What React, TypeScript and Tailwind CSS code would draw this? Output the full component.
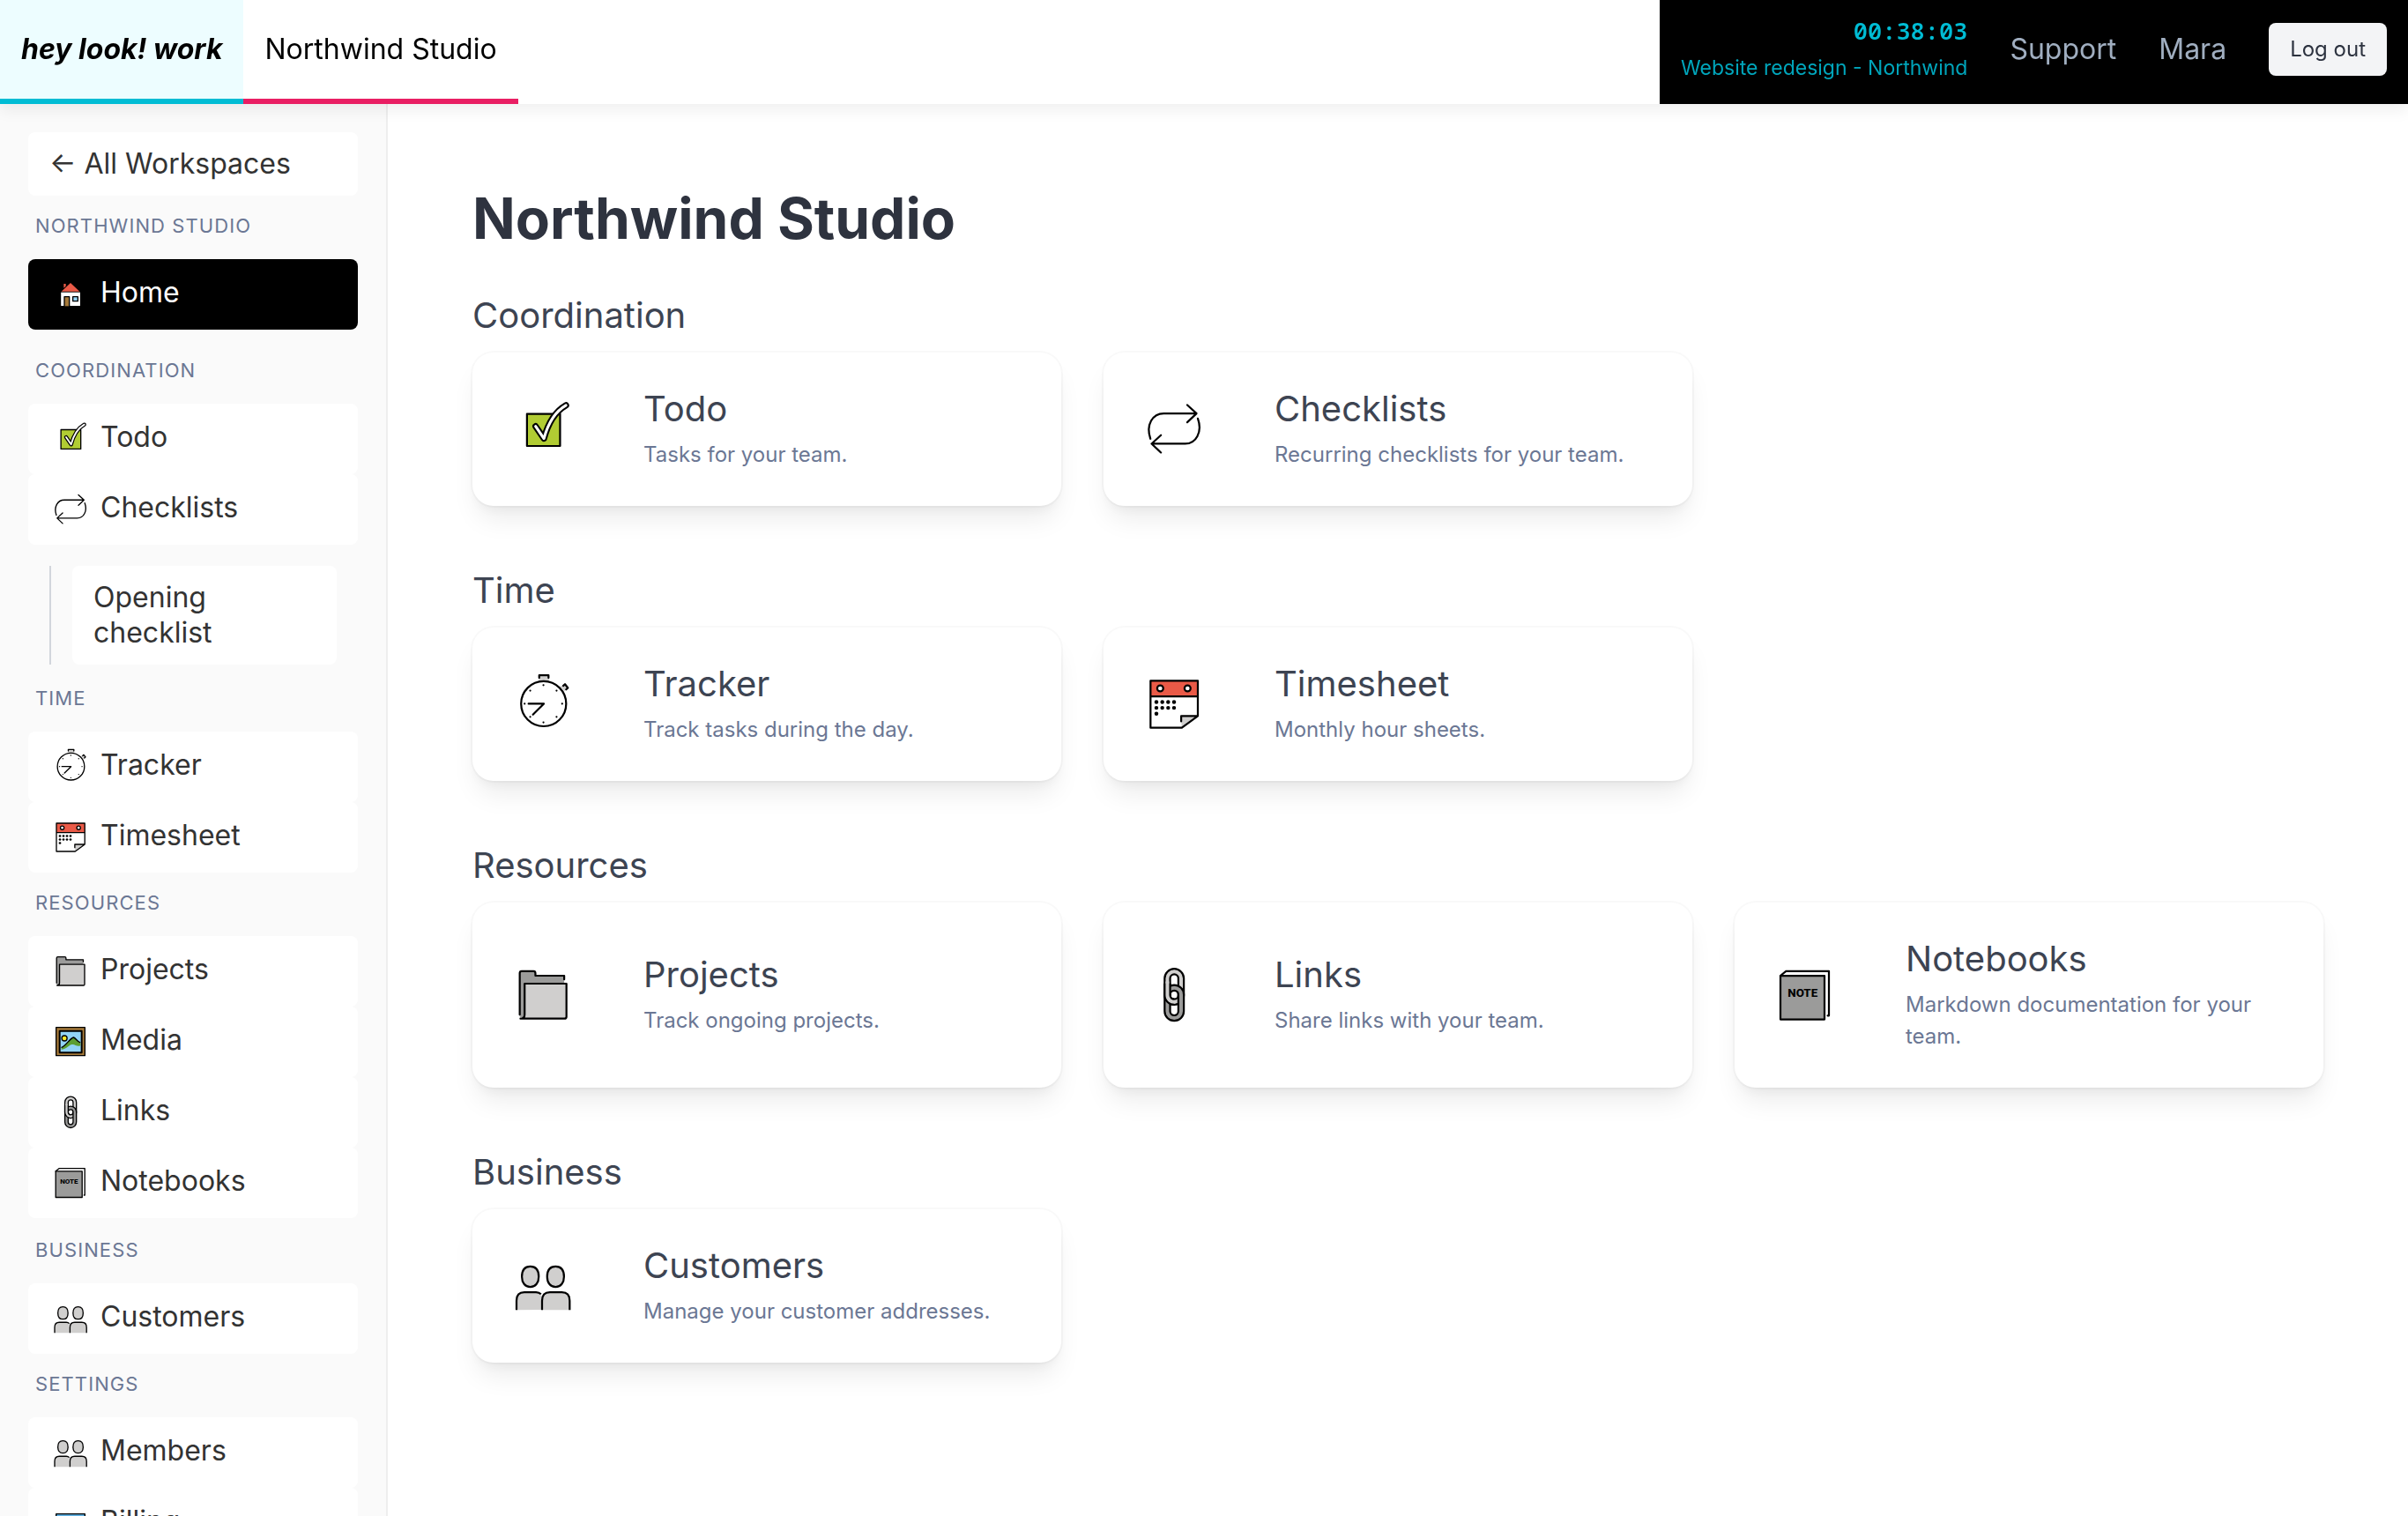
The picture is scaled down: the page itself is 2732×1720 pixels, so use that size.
import type { ReactNode } from 'react'

type IconName =
  | 'home' | 'todo' | 'repeat' | 'stopwatch' | 'calendar' | 'folder'
  | 'picture' | 'link' | 'note' | 'people' | 'card'

const drawings: Record<IconName, ReactNode> = {
  home: (
    <>
      <path d="M24.5 25v-7h3.5v4z" fill="#ea5a47" />
      <path d="M20.5 31 36 16.5 51.500 31z" fill="#ea5a47" />
      <path d="M19.800 32.500h32.600v23H19.800z" fill="#fff" />
      <path d="M25.500 56V40h8.500v16" fill="#a57939" stroke="#000" />
      <path d="M40 40h8.500v7.500H40z" fill="#92d3f5" stroke="#000" />
    </>
  ),
  todo: (
    <>
      <path d="M19.700 20.300h33.800v32.800H19.700z" fill="#b1cc33" stroke="#000" />
      <path d="M28.500 33 37 45.500C41 30.500 49 17.500 59.500 11.500" stroke="#000" strokeWidth="6.500" />
      <path d="M28.500 33 37 45.500C41 30.500 49 17.500 59.500 11.500" stroke="#fff" strokeWidth="2.800" />
    </>
  ),
  repeat: (
    <g stroke="#000">
      <path d="M11.900 45.700C7 31.500 14 19.900 25.500 19.900H59M49.500 11.200 59 19.900l-9.500 9" />
      <path d="M60.300 25c5 14-2 25.800-12.900 25.800H13.100M22.600 42.100l-9.500 8.700 9.500 9" />
    </g>
  ),
  stopwatch: (
    <>
      <path d="M32 7.500h10v5H32zM53.500 18l4-2.500 3.500 4-3 3z" fill="#d0cfce" />
      <circle cx="36.700" cy="35.500" r="23" fill="#fff" stroke="#000" />
      <path d="M32.200 9.100V6.500h9.500v2.600M56.700 17.200l1.800-1.700 3 3.800-1.800 1.600M21.300 35.500h15.600L25.800 46.600" stroke="#000" />
      <g fill="#000">
        <circle cx="36.500" cy="16.500" r="1" /><circle cx="49.900" cy="22.100" r="1" />
        <circle cx="55.600" cy="35.500" r="1" /><circle cx="49.900" cy="48.900" r="1" />
        <circle cx="36.500" cy="54.500" r="1" /><circle cx="23" cy="48.900" r="1" />
        <circle cx="17.300" cy="35.500" r="1" /><circle cx="23" cy="22.100" r="1" />
      </g>
    </>
  ),
  calendar: (
    <>
      <path d="M12 12h48.300v36L44 60H12z" fill="#fff" />
      <path d="M12 12h48.300v16H12z" fill="#ea5a47" />
      <path d="M43.300 48h17L43.800 60z" fill="#d0cfce" />
      <path d="M12 12h48.300v36L44 60H12zM12 28h48.300M60.300 48h-17v5.500" stroke="#000" />
      <circle cx="21.900" cy="19.800" r="3.100" fill="#fff" stroke="#000" />
      <circle cx="49.800" cy="19.800" r="3.100" fill="#fff" stroke="#000" />
      <g fill="#000">
        {[18, 24, 30, 36].map((x) => (
          <g key={x}>
            <circle cx={x} cy="33.700" r="2" />
            <circle cx={x} cy="39.700" r="2" />
          </g>
        ))}
        <circle cx="18" cy="45.700" r="2" />
      </g>
    </>
  ),
  folder: (
    <>
      <path d="M12.300 58V13.500q0-2 2-2h12q2 0 2 2v2.700h29.400V24H17.300v36z" fill="#9b9b9a" />
      <path d="M17.300 24.300H60V58q0 2-2 2H15q2.300-.5 2.300-3z" fill="#d0cfce" />
      <path d="M12.300 56V13.500q0-2 2-2h12q2 0 2 2v2.700h29.400v3.800" stroke="#000" />
      <path d="M13 60q4.300 0 4.300-4V24.300H60V58q0 2-2 2z" stroke="#000" />
    </>
  ),
  picture: (
    <>
      <path d="M11.500 11.500h49v48h-49z" fill="#a57939" stroke="#000" />
      <path d="M17.500 17.500h37.500v37H17.500z" fill="#92d3f5" stroke="#000" strokeWidth="3" />
      <path d="M20.500 46C29 42 33 32 40 29c5 0 7 7 13 8.500v5c-7 3-10-4-16-1.500-5 2-9 8-16.500 8z" fill="#5c9e31" />
      <path d="M21 45.500C29 42 34 31 41 28.500c4 1 6 7 11 8.500" stroke="#000" />
      <circle cx="25.700" cy="30" r="4.500" fill="#fcea2b" stroke="#000" />
    </>
  ),
  link: (
    <>
      <rect x="29.200" y="12" width="14" height="31" rx="7" stroke="#000" strokeWidth="7.600" />
      <rect x="29.200" y="12" width="14" height="31" rx="7" stroke="#d0cfce" strokeWidth="3.600" />
      <rect x="29.200" y="28.500" width="14" height="31" rx="7" stroke="#000" strokeWidth="7.600" />
      <rect x="29.200" y="28.500" width="14" height="31" rx="7" stroke="#9b9b9a" strokeWidth="3.600" />
      <path d="M29.200 24v12a7 7 0 0 0 7 7" stroke="#000" strokeWidth="7.600" strokeLinecap="butt" />
      <path d="M29.200 22v14a7 7 0 0 0 8 7" stroke="#d0cfce" strokeWidth="3.600" strokeLinecap="butt" />
    </>
  ),
  note: (
    <>
      <path d="M10.800 16.200 16.500 11.500H60.500V57h-4.600z" fill="#fff" />
      <path d="M10.800 16.200 16.500 11.500H60.300V57h-1.300" stroke="#000" />
      <path d="M10.800 16.300h45V60.800h-45z" fill="#9b9b9a" stroke="#000" />
      <text x="33.500" y="38.200" textAnchor="middle" fontSize="12" fontWeight="800" fontFamily="Roboto, sans-serif" fill="#000" stroke="none">NOTE</text>
    </>
  ),
  people: (
    <g fill="#d0cfce" stroke="#000" strokeLinecap="butt">
      <path d="M23.100 16c6 0 8.600 4.500 8.600 10.500S28.600 37 23.100 37 14.500 32.500 14.500 26.500 17.100 16 23.100 16z" />
      <path d="M48.900 16c6 0 8.600 4.500 8.600 10.500S54.400 37 48.900 37 40.300 32.500 40.300 26.500 42.900 16 48.900 16z" />
      <path d="M9 60.500V51c0-5.500 3-8.600 8-8.600h12q3 0 5 2l1 16" stroke="none" />
      <path d="M9 60.500V51c0-5.500 3-8.600 8-8.600h12q3 0 5 2" fill="none" />
      <path d="M35.100 60.500V51c0-5.500 3-8.600 8-8.600h12.200c5 0 8 3.100 8 8.600v9.500" />
    </g>
  ),
  card: (
    <>
      <path d="M11.500 20.500h49v31h-49z" fill="#61b2e4" stroke="#000" />
      <path d="M12 27h48v6H12z" fill="#3f3f3f" />
    </>
  ),
}

function Icon({ name, className }: { name: IconName; className: string }) {
  return (
    <svg viewBox="0 0 72 72" className={className} fill="none" strokeWidth="2" strokeLinecap="round" strokeLinejoin="round" aria-hidden="true">
      {drawings[name]}
    </svg>
  )
}

function NavItem({ icon, label, active = false }: { icon: IconName; label: string; active?: boolean }) {
  return (
    <li>
      <a
        href="#"
        aria-current={active ? 'page' : undefined}
        className={
          active
            ? 'block rounded-lg bg-black px-6 py-4 text-[32px] leading-10 text-white'
            : 'block rounded-lg bg-white px-6 py-4 text-[32px] leading-10 text-[#333333]'
        }
      >
        <Icon name={icon} className="mr-2.5 inline-block size-12 align-middle" />
        {label}
      </a>
    </li>
  )
}

function NavGroup({ title, children }: { title: string; children: ReactNode }) {
  return (
    <section>
      <h2 className="px-2 pt-5 pb-6 text-[22px] leading-7 tracking-wider text-[#6b7794] uppercase">{title}</h2>
      <ul>{children}</ul>
    </section>
  )
}

function Card({ icon, title, text }: { icon: IconName; title: string; text: string }) {
  return (
    <a
      href="#"
      className="flex items-center rounded-3xl bg-white p-10 shadow-[0_0_0_2px_rgba(0,0,0,0.025),0_20px_30px_-6px_rgba(0,0,0,0.08),0_8px_12px_-4px_rgba(0,0,0,0.04)]"
    >
      <div className="w-[154px] shrink-0">
        <Icon name={icon} className="block size-20" />
      </div>
      <div className="min-w-0 flex-1">
        <h3 className="mb-2.5 text-[40px] leading-[48px] text-[#3d4452]">{title}</h3>
        <p className="text-2xl leading-9 text-[#6b7794]">{text}</p>
      </div>
    </a>
  )
}

type CardData = { icon: IconName; title: string; text: string }

const sections: { title: string; cards: CardData[] }[] = [
  {
    title: 'Coordination',
    cards: [
      { icon: 'todo', title: 'Todo', text: 'Tasks for your team.' },
      { icon: 'repeat', title: 'Checklists', text: 'Recurring checklists for your team.' },
    ],
  },
  {
    title: 'Time',
    cards: [
      { icon: 'stopwatch', title: 'Tracker', text: 'Track tasks during the day.' },
      { icon: 'calendar', title: 'Timesheet', text: 'Monthly hour sheets.' },
    ],
  },
  {
    title: 'Resources',
    cards: [
      { icon: 'folder', title: 'Projects', text: 'Track ongoing projects.' },
      { icon: 'link', title: 'Links', text: 'Share links with your team.' },
      { icon: 'note', title: 'Notebooks', text: 'Markdown documentation for your team.' },
    ],
  },
  {
    title: 'Business',
    cards: [{ icon: 'people', title: 'Customers', text: 'Manage your customer addresses.' }],
  },
]

export default function App() {
  return (
    <div className="flex h-screen flex-col overflow-hidden bg-white font-['Inter',sans-serif]">
      <header className="relative z-10 flex items-stretch justify-between bg-white text-[32px] leading-10 shadow-[0_8px_16px_rgba(0,0,0,0.06)]">
        <nav className="flex" aria-label="Workspaces">
          <a href="#" className="border-b-6 border-[#00bcd4] bg-[#edfdff] px-6 py-9 font-bold text-black italic">
            hey look! work
          </a>
          <a href="#" className="border-b-6 border-[#e91e63] px-6 py-9 text-black">
            Northwind Studio
          </a>
        </nav>
        <div className="flex items-center gap-12 border-b-6 border-black bg-black px-6 text-[#a0aec0]">
          <a href="#" className="flex flex-col gap-1.5 text-right">
            <span className="font-['Noto_Sans_Mono',monospace] text-[27px] leading-9 font-semibold text-[#00bcd4]">00:38:03</span>
            <span className="text-[23px] leading-9 text-[#00a5bb]">Website redesign - Northwind</span>
          </a>
          <a href="#">Support</a>
          <a href="#">Mara</a>
          <button type="button" className="rounded-lg bg-[#f3f4f6] px-6 py-3 text-2xl leading-9 text-[#2d3340]">
            Log out
          </button>
        </div>
      </header>

      <div className="flex min-h-0 flex-1">
        <aside className="w-[440px] shrink-0 overflow-y-auto border-r-2 border-[#eeeeee] bg-[#fafafa] px-8 pt-8 [scrollbar-width:none]">
          <a href="#" className="block rounded-lg bg-white px-6 py-4 text-[32px] leading-10 text-[#333333]">
            ← All Workspaces
          </a>
          <nav aria-label="Workspace">
            <NavGroup title="Northwind Studio">
              <NavItem icon="home" label="Home" active />
            </NavGroup>
            <div className="pt-3">
              <NavGroup title="Coordination">
                <NavItem icon="todo" label="Todo" />
                <NavItem icon="repeat" label="Checklists" />
                <li className="mx-6 mt-6 mb-1 border-l-2 border-[#d2d6dc] pl-6">
                  <a href="#" className="block rounded-lg bg-white px-6 py-4 text-[32px] leading-10 text-[#333333]">
                    Opening checklist
                  </a>
                </li>
              </NavGroup>
            </div>
            <NavGroup title="Time">
              <NavItem icon="stopwatch" label="Tracker" />
              <NavItem icon="calendar" label="Timesheet" />
            </NavGroup>
            <NavGroup title="Resources">
              <NavItem icon="folder" label="Projects" />
              <NavItem icon="picture" label="Media" />
              <NavItem icon="link" label="Links" />
              <NavItem icon="note" label="Notebooks" />
            </NavGroup>
            <div className="pt-0.5">
              <NavGroup title="Business">
                <NavItem icon="people" label="Customers" />
              </NavGroup>
              <NavGroup title="Settings">
                <NavItem icon="people" label="Members" />
                <NavItem icon="card" label="Billing" />
              </NavGroup>
            </div>
          </nav>
        </aside>

        <main className="min-w-0 flex-1 overflow-y-auto px-24 pt-24 pb-24 [scrollbar-width:none]">
          <h1 className="mb-[52px] text-[64px] leading-[68px] font-bold text-[#2e333f]">Northwind Studio</h1>
          <div className="flex flex-col gap-[72px]">
            {sections.map((section) => (
              <section key={section.title}>
                <h2 className="mb-[18px] text-[40px] leading-[48px] text-[#3d4452]">{section.title}</h2>
                <div className="grid grid-cols-3 gap-12">
                  {section.cards.map((card) => (
                    <Card key={card.title} {...card} />
                  ))}
                </div>
              </section>
            ))}
          </div>
        </main>
      </div>
    </div>
  )
}
